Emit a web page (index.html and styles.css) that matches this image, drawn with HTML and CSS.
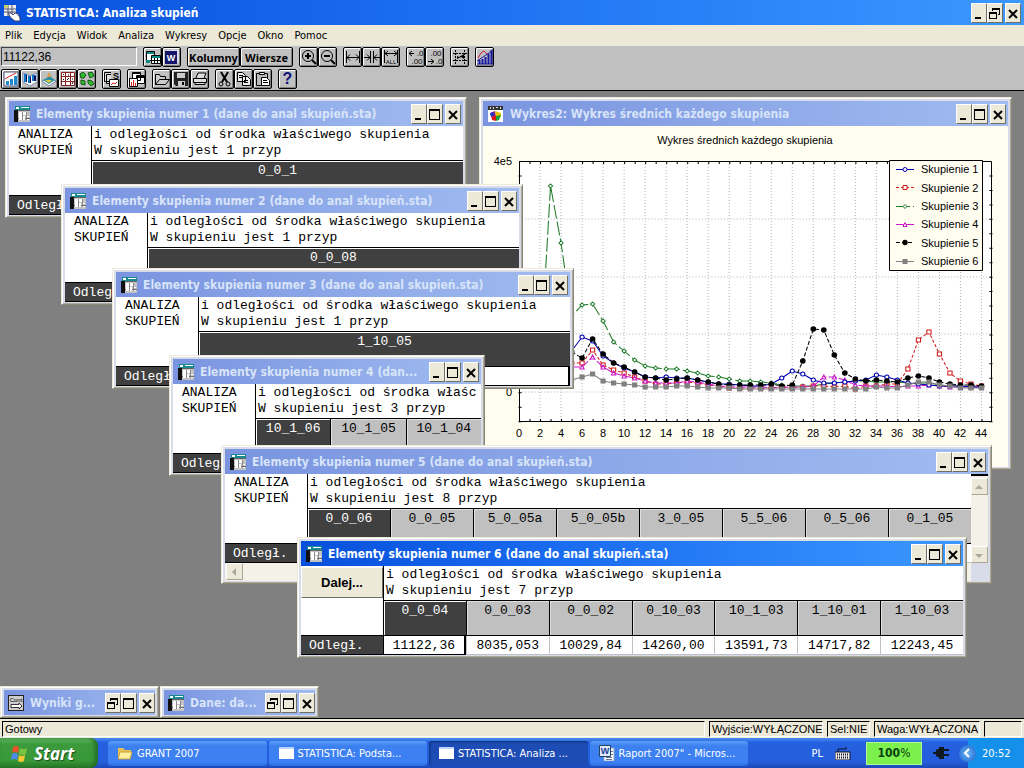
FILE: index.html
```
<!DOCTYPE html>
<html lang="pl">
<head>
  <meta charset="UTF-8">
  <title>STATISTICA: Analiza skupień</title>
  <meta name="viewport" content="width=device-width, initial-scale=1.0">
  <link rel="stylesheet" href="styles.css">
</head>
<body>
  <!-- shared icons -->
  <svg class="defs" aria-hidden="true">
    <symbol id="i-min" viewBox="0 0 14 18"><path d="M3 13h6v2H3z"/></symbol>
    <symbol id="i-max" viewBox="0 0 14 18"><path d="M1 4h11v11H1zM2 6v8h9V6z" fill-rule="evenodd"/></symbol>
    <symbol id="i-restore" viewBox="0 0 14 18"><path d="M4 4h8v7h-2v-1h1V6H5v1H4zM1 8h8v7H1zM2 10v4h6v-4z" fill-rule="evenodd"/></symbol>
    <symbol id="i-close" viewBox="0 0 14 18"><path d="M3 6l8 8M11 6l-8 8" stroke="#000" stroke-width="2"/></symbol>
    <symbol id="i-sheet" viewBox="0 0 16 16">
      <path d="M1 0h15v4H1z" fill="#178a8f"/><path d="M0 4h5v12H0z" fill="#111"/><path d="M4 4h12v12H4z" fill="#c4c4c4"/>
      <path d="M2 1h3v2H2zM7 1h8v1H7z" fill="#fff"/><path d="M4 4.500h12M4 12.500h12" stroke="#666"/><path d="M5 6h3v8H5zM9 6h3v3H9zM9 10h2v4H9zM12 10h3v1h-3zM12 13h3v1h-3z" fill="#fff"/><path d="M8.500 6v8M12.500 6v8" stroke="#888"/>
    </symbol>
    <symbol id="i-graph" viewBox="0 0 16 16">
      <path d="M0 0h15v16H0z" fill="#fff"/><path d="M0 0h15v4H0z" fill="#333"/><path d="M2 1h1v2H2zM5 1h1v2H5zM8 1h2v1H8zM12 1h1v2h-1z" fill="#ddd"/>
      <path d="M2 7l5-2 1 5-5 1z" fill="#7a1fa0"/><path d="M7 5l6 2v4H8z" fill="#e8c400"/><path d="M3 9l5 1v5l-4-1z" fill="#e01818"/><path d="M8 10l5-1-2 5-3 1z" fill="#18a038"/><path d="M2 8l2-2 2 3-2 2z" fill="#1838d0"/>
    </symbol>
  </svg>

  <header class="titlebar">
    <svg class="app-icon" viewBox="0 0 18 18"><path d="M1 1h12v11H1z" fill="#eee"/><path d="M1 5h12M1 8h12M5 1v11M9 1v11" stroke="#557"/><path d="M1 1h4v3H1z" fill="#c8d070"/><path d="M5 9h3l2 2 2-2 3 1 2 4v3h-5l-4-3z" fill="#fff" stroke="#446"/></svg>
    <h1>STATISTICA: Analiza skupień</h1>
    <div class="win-buttons">
      <button aria-label="Minimalizuj"><svg><use href="#i-min"/></svg></button>
      <button aria-label="Przywróć"><svg><use href="#i-restore"/></svg></button>
      <button aria-label="Zamknij" class="close"><svg><use href="#i-close"/></svg></button>
    </div>
  </header>

  <nav class="menubar">
    <button>Plik</button><button>Edycja</button><button>Widok</button><button>Analiza</button><button>Wykresy</button><button>Opcje</button><button>Okno</button><button>Pomoc</button>
  </nav>

  <div class="toolbars">
    <div class="toolbar first">
      <input class="cell-value" type="text" value="11122,36" aria-label="Wartość">
      <div class="group">
        <button aria-label="Arkusz"><svg viewBox="0 0 16 16"><path d="M1.500 2.500h8v9h-8z" fill="#fff" stroke="#000"/><path d="M2 3h7v2H2z" fill="#0a8a80"/><path d="M6.500 6.500h9v8h-9z" fill="#fff" stroke="#000"/><path d="M7 7h8v2H7zM1 11h4v3H1z" fill="#0a8a80"/><path d="M7 11.500h8M9.500 9v5M12.500 9v5" stroke="#000"/></svg></button>
        <button aria-label="Word"><svg viewBox="0 0 16 16"><path d="M3 1h12v12H3z" fill="#dde"/><path d="M1 2h12v13H1z" fill="#15156a"/><text x="7" y="12" class="t9" fill="#fff">W</text></svg></button>
      </div>
      <div class="group">
        <button class="wide">Kolumny</button><button class="wide">Wiersze</button>
      </div>
      <div class="group">
        <button aria-label="Powiększ"><svg viewBox="0 0 16 16"><g fill="none" stroke="#000"><circle cx="7" cy="7" r="5.5"/><path d="M4 7h6M7 4v6M11 11l4 4" stroke-width="2"/></g></svg></button>
        <button aria-label="Pomniejsz"><svg viewBox="0 0 16 16"><g fill="none" stroke="#000"><circle cx="7" cy="7" r="5.5"/><path d="M4 7h6M11 11l4 4" stroke-width="2"/></g></svg></button>
      </div>
      <div class="group">
        <button aria-label="Poszerz"><svg viewBox="0 0 16 16"><path d="M1.500 2v12M14.500 2v12M2 8.500h12M5 5.500l-3 3 3 3M11 5.500l3 3-3 3" fill="none" stroke="#000"/></svg></button>
        <button aria-label="Zwęź"><svg viewBox="0 0 16 16"><path d="M6.500 2v12M9.500 2v12M0 8.500h6M10 8.500h6M3 5.500l3 3-3 3M13 5.500l-3 3 3 3" fill="none" stroke="#000"/></svg></button>
        <button aria-label="Dopasuj wszystkie"><svg viewBox="0 0 16 16"><path d="M1.500 1v13M14.500 1v13M2 4.500h12M5 2L2 4.500 5 7M11 2l3 2.500L11 7" fill="none" stroke="#000"/><text x="8" y="15" class="t6">ALL</text></svg></button>
      </div>
      <div class="group">
        <button aria-label="Mniej miejsc"><svg viewBox="0 0 16 16"><path d="M1 4.500h5M4 2L1 4.500 4 7" fill="none" stroke="#000"/><text x="12" y="7" class="t8">.0</text><text x="9" y="15" class="t8">.00</text></svg></button>
        <button aria-label="Więcej miejsc"><svg viewBox="0 0 16 16"><text x="9" y="7" class="t8">.00</text><path d="M1 12.500h5M4 10l3 2.500L4 15" fill="none" stroke="#000"/><text x="12" y="15" class="t8">.0</text></svg></button>
      </div>
      <div class="group">
        <button aria-label="Przypadki"><svg viewBox="0 0 16 16"><path d="M3.500 1v14M12.500 1v14M1 4.500h14M1 11.500h14" stroke="#000" stroke-dasharray="2 1"/><path d="M5 10V7l2 1 5-3v5l-3-2z"/></svg></button>
      </div>
      <div class="group">
        <button aria-label="Wykres"><svg viewBox="0 0 16 16"><path d="M1 9l3-5 3-2 4 4" fill="none" stroke="#d02040"/><path d="M2.500 15v-4M5.500 15v-5M8.500 15V8M11.500 15V5M14.500 15V1" stroke="#1616a0" stroke-width="2"/><path d="M0 12L15 2M0 15h16" stroke="#1616a0"/></svg></button>
      </div>
    </div>
    <div class="toolbar second">
      <div class="group">
        <button aria-label="Wykresy 2W"><svg viewBox="0 0 16 16"><path d="M1 1h14v14H1z" fill="#fff" stroke="#457"/><path d="M3 14v-4h3v4M7 14V8h3v6M11 14V5h3v9" fill="#28c"/><path d="M2 8l5-3 6-3" fill="none" stroke="#d22"/></svg></button>
        <button aria-label="Wykresy 3W sekwencyjne"><svg viewBox="0 0 16 16"><path d="M1 2l7 3 7-3v9l-7 4-7-4z" fill="#fff" stroke="#78a"/><path d="M2 3h3v8H2zM6 5h3v7H6zM10 4h4v6h-4z" fill="#17c"/><path d="M4 4h1v7H4zM8 6h1v6H8zM12 5h2v5h-2z" fill="#115"/></svg></button>
        <button aria-label="Wykresy 3W XYZ"><svg viewBox="0 0 16 16"><path d="M1 10l7-3 7 3-7 5z" fill="#fff" stroke="#78a"/><path d="M2 9l4-2 2-5 3 5 3 2-6 4z" fill="#2a8fa0"/><path d="M6 6l2-5 2 5z" fill="#e94"/><path d="M4 9h7l-3 3z" fill="#dc4"/></svg></button>
        <button aria-label="Macierzowe"><svg viewBox="0 0 16 16"><path d="M1.500 1.500h13v13h-13z" fill="#fff" stroke="#822"/><path d="M1 5.500h14M1 10.500h14M5.500 1v14M10.500 1v14" stroke="#822"/><path d="M3 4l1-1M7 9l2-2M12 13l1-2M8 4h1M3 9l1-1M12 8h1" stroke="#111"/></svg></button>
        <button aria-label="Obrazkowe"><svg viewBox="0 0 16 16"><path d="M1 3l3-2 3 3-2 3H2zM9 2l4-1 2 4-4 2zM2 9l4 1v4l-4-1zM9 9l4 1 2 3-3 2-3-3z" fill="#3b3" stroke="#151"/></svg></button>
      </div>
      <div class="group">
        <button aria-label="Statystyki"><svg viewBox="0 0 16 16"><path d="M.5 1.500h9v9h-9zM2.500 3.500h9v9h-9z" fill="#ddd" stroke="#000"/><path d="M5.500 8.500h9v7h-9z" fill="#fff" stroke="#000"/><path d="M7 0h9v8H7z" fill="#c0c0c0"/><text x="12" y="8" class="t9">S</text><path d="M7 14l2-2 2 1 2-2" fill="none" stroke="#d22"/></svg></button>
      </div>
      <div class="group">
        <button aria-label="Okna"><svg viewBox="0 0 16 16"><path d="M3.500 1.500h8v8h-8zM7.500 4.500h8v8h-8z" fill="#fff" stroke="#000"/><path d="M4 2h7v1H4zM8 5h7v2H8z"/><path d="M.5 7.500h8v8h-8z" fill="#fff" stroke="#000"/><path d="M2.500 15v-4M4.500 15v-6M6.500 15v-3" stroke="#d22"/></svg></button>
      </div>
      <div class="group">
        <button aria-label="Otwórz"><svg viewBox="0 0 16 16"><path d="M1.500 13V3.500h4l1 2h5V8M1.500 13.500l4-5h10l-4 5z" fill="#ccc" stroke="#000"/></svg></button>
        <button aria-label="Zapisz"><svg viewBox="0 0 16 16"><path d="M1 1h14v14H3l-2-2z" fill="#222"/><path d="M4 2h8v5H4zM5 10h7v5H5z" fill="#ccc"/><path d="M9 11h2v3H9z"/></svg></button>
        <button aria-label="Drukuj"><svg viewBox="0 0 16 16"><path d="M4 7l2-5h8l-2 5M1.500 7.500h13v4h-13zM3 11.500h10v2H3z" fill="#ddd" stroke="#000"/></svg></button>
      </div>
      <div class="group">
        <button aria-label="Wytnij"><svg viewBox="0 0 16 16"><path d="M4 1l6 10M11 1L5 11" stroke="#000" stroke-width="2"/><circle cx="4" cy="13" r="2" fill="none" stroke="#000"/><circle cx="11" cy="13" r="2" fill="none" stroke="#000"/></svg></button>
        <button aria-label="Kopiuj"><svg viewBox="0 0 16 16"><path d="M1.500 1.500h5l3 3v6h-8zM6.500 5.500h5l3 3v6h-8z" fill="#eee" stroke="#000"/><path d="M3 4.500h4M3 6.500h3M8 9.500h4M8 11.500h4" stroke="#000"/></svg></button>
        <button aria-label="Wklej"><svg viewBox="0 0 16 16"><path d="M1.500 2.500h11v12h-11z" fill="#bbb" stroke="#000"/><path d="M4.500 1.500h5v2h-5z" fill="#eee" stroke="#000"/><path d="M6.500 6.500h5l3 3v5h-8z" fill="#fff" stroke="#000"/><path d="M8 9.500h4M8 11.500h5" stroke="#000"/></svg></button>
      </div>
      <div class="group">
        <button aria-label="Pomoc" class="help">?</button>
      </div>
    </div>
  </div>

  <main class="desktop">
    <section class="window chart-window">
      <div class="caption">
        <svg class="icon"><use href="#i-graph"/></svg>
        <h2>Wykres2: Wykres średnich każdego skupienia</h2>
        <div class="win-buttons">
          <button aria-label="Minimalizuj"><svg><use href="#i-min"/></svg></button>
          <button aria-label="Maksymalizuj"><svg><use href="#i-max"/></svg></button>
          <button aria-label="Zamknij" class="close"><svg><use href="#i-close"/></svg></button>
        </div>
      </div>
      <svg class="chart" viewBox="0 0 525 341">
        <defs>
          <marker id="m1" markerWidth="7" markerHeight="7" refX="3.5" refY="3.5" markerUnits="userSpaceOnUse"><circle cx="3.5" cy="3.5" r="2" fill="#fff" stroke="#0000b0"/></marker>
          <marker id="m2" markerWidth="7" markerHeight="7" refX="3.5" refY="3.5" markerUnits="userSpaceOnUse"><path d="M1.500 1.500h4v4h-4z" fill="#fff" stroke="#d01818"/></marker>
          <marker id="m3" markerWidth="7" markerHeight="7" refX="3.5" refY="3.5" markerUnits="userSpaceOnUse"><path d="M3.500 1.500l2 2-2 2-2-2z" fill="#fff" stroke="#1c7a28"/></marker>
          <marker id="m4" markerWidth="7" markerHeight="7" refX="3.5" refY="3.5" markerUnits="userSpaceOnUse"><path d="M3.500 1.500l2 4h-4z" fill="#fff" stroke="#c818c8"/></marker>
          <marker id="m5" markerWidth="7" markerHeight="7" refX="3.5" refY="3.5" markerUnits="userSpaceOnUse"><circle cx="3.5" cy="3.5" r="2.700"/></marker>
          <marker id="m6" markerWidth="7" markerHeight="7" refX="3.5" refY="3.5" markerUnits="userSpaceOnUse"><path d="M1 1h5v5H1z" fill="#808080"/></marker>
        </defs>
        <text x="262" y="18" text-anchor="middle">Wykres średnich każdego skupienia</text>
        <text x="29" y="39" text-anchor="end">4e5</text>
        <text x="29" y="270" text-anchor="end">0</text>

        <svg x="36" y="35" width="473" height="261" viewBox="0 0 450 261" preserveAspectRatio="none" overflow="visible">
          <path d="M0 0h450v261H0z" fill="#fff"/>
          <path class="grid" d="M20 0v261M40 0v261M60 0v261M80 0v261M100 0v261M120 0v261M140 0v261M160 0v261M180 0v261M200 0v261M220 0v261M240 0v261M260 0v261M280 0v261M300 0v261M320 0v261M340 0v261M360 0v261M380 0v261M400 0v261M420 0v261M440 0v261M0 58h450M0 116h450M0 173h450M0 231h450"/>
          <path d="M0 1.500h450M0 259.500h450" fill="none" stroke="#000" stroke-width="3" stroke-dasharray="1 9"/>
          <path d="M1 14.500v247M449 14.500v247" fill="none" stroke="#000" stroke-width="3" stroke-dasharray="1 13.450"/>
          <polyline class="s3" points="10,224 20,205 30,25 40,82 50,155 60,144 70,143 80,160 90,181 100,190 110,199 120,205 130,207 140,208 150,208 160,210 170,212 180,215 190,216 200,218 210,220 220,220 230,221 240,222 250,224 260,225 270,225 280,225 290,223 300,222 310,221 320,220 330,220 340,221 350,221 360,221 370,222 380,222 390,222 400,224 410,225 420,225 430,225 440,226"/>
          <polyline class="s2" points="50,202 60,202 70,189 80,204 90,209 100,212 110,216 120,220 130,223 140,223 150,222 160,221 170,222 180,224 190,225 200,227 210,227 220,227 230,227 240,227 250,226 260,227 270,226 280,225 290,225 300,226 310,225 320,228 330,225 340,225 350,223 360,223 370,208 380,179 390,171 400,193 410,212 420,220 430,223 440,225"/>
          <polyline class="s4" points="50,206 60,206 70,196 80,206 90,212 100,215 110,217 120,220 130,222 140,222 150,222 160,220 170,221 180,223 190,225 200,226 210,226 220,226 230,226 240,227 250,226 260,226 270,226 280,225 290,216 300,216 310,219 320,224 330,225 340,225 350,225 360,226 370,225 380,225 390,224 400,225 410,226 420,226 430,226 440,226"/>
          <polyline class="s1" points="50,190 60,176 70,180 80,195 90,202 100,207 110,211 120,216 130,217 140,216 150,217 160,217 170,219 180,221 190,223 200,223 210,224 220,225 230,225 240,223 250,217 260,210 270,213 280,219 290,222 300,222 310,221 320,220 330,219 340,214 350,216 360,219 370,222 380,223 390,224 400,225 410,225 420,225 430,226 440,226"/>
          <polyline class="s5" points="50,191 60,197 70,178 80,193 90,202 100,206 110,211 120,216 130,217 140,219 150,218 160,217 170,219 180,221 190,223 200,224 210,224 220,224 230,224 240,223 250,225 260,224 270,200 280,168 290,169 300,194 310,212 320,218 330,220 340,219 350,220 360,221 370,217 380,215 390,217 400,221 410,223 420,224 430,224 440,225"/>
          <polyline class="s6" points="50,219 60,216 70,213 80,220 90,222 100,223 110,224 120,226 130,226 140,226 150,225 160,225 170,226 180,227 190,227 200,227 210,228 220,228 230,228 240,228 250,228 260,228 270,228 280,228 290,228 300,228 310,228 320,228 330,228 340,226 350,227 360,227 370,224 380,221 390,221 400,224 410,225 420,227 430,227 440,227"/>
        </svg>
        <path class="frame" d="M36.500 35.500h472v260h-472z"/>

        <g text-anchor="middle">
          <text x="36" y="311">0</text><text x="57" y="311">2</text><text x="78" y="311">4</text><text x="99" y="311">6</text><text x="120" y="311">8</text>
          <text x="141" y="311">10</text><text x="162" y="311">12</text><text x="183" y="311">14</text><text x="204" y="311">16</text><text x="225" y="311">18</text>
          <text x="246" y="311">20</text><text x="267" y="311">22</text><text x="288" y="311">24</text><text x="309" y="311">26</text><text x="330" y="311">28</text>
          <text x="351" y="311">30</text><text x="372" y="311">32</text><text x="393" y="311">34</text><text x="414" y="311">36</text><text x="435" y="311">38</text>
          <text x="456" y="311">40</text><text x="477" y="311">42</text><text x="498" y="311">44</text>
        </g>

        <path class="legend-box" d="M406.500 34.500h93v110h-93z"/>
        <polyline class="s1" points="413,43.500 422,43.500 431,43.500"/>
        <polyline class="s2" points="413,61.500 422,61.500 431,61.500"/>
        <polyline class="s3" points="413,80.500 422,80.500 431,80.500"/>
        <polyline class="s4" points="413,98.500 422,98.500 431,98.500"/>
        <polyline class="s5" points="413,116.500 422,116.500 431,116.500"/>
        <polyline class="s6" points="413,135.500 422,135.500 431,135.500"/>
        <text x="438" y="47">Skupienie 1</text>
        <text x="438" y="66">Skupienie 2</text>
        <text x="438" y="84">Skupienie 3</text>
        <text x="438" y="102">Skupienie 4</text>
        <text x="438" y="121">Skupienie 5</text>
        <text x="438" y="139">Skupienie 6</text>
      </svg>
    </section>

    <section class="window sheet-1">
      <div class="caption">
        <svg class="icon"><use href="#i-sheet"/></svg>
        <h2>Elementy skupienia numer 1 (dane do anal skupień.sta)</h2>
        <div class="win-buttons">
          <button aria-label="Minimalizuj"><svg><use href="#i-min"/></svg></button>
          <button aria-label="Maksymalizuj"><svg><use href="#i-max"/></svg></button>
          <button aria-label="Zamknij" class="close"><svg><use href="#i-close"/></svg></button>
        </div>
      </div>
      <table class="sheet">
        <tr class="info"><th class="side">ANALIZA<br>SKUPIEŃ</th><td>i odległości od środka właściwego skupienia<br>W skupieniu jest 1 przyp</td></tr>
        <tr class="names"><td class="side"></td><th class="on">0_0_1</th></tr>
        <tr class="values"><th class="side">Odległ.</th><td class="on"></td></tr>
      </table>
    </section>

    <section class="window sheet-2">
      <div class="caption">
        <svg class="icon"><use href="#i-sheet"/></svg>
        <h2>Elementy skupienia numer 2 (dane do anal skupień.sta)</h2>
        <div class="win-buttons">
          <button aria-label="Minimalizuj"><svg><use href="#i-min"/></svg></button>
          <button aria-label="Maksymalizuj"><svg><use href="#i-max"/></svg></button>
          <button aria-label="Zamknij" class="close"><svg><use href="#i-close"/></svg></button>
        </div>
      </div>
      <table class="sheet">
        <tr class="info"><th class="side">ANALIZA<br>SKUPIEŃ</th><td>i odległości od środka właściwego skupienia<br>W skupieniu jest 1 przyp</td></tr>
        <tr class="names"><td class="side"></td><th class="on">0_0_08</th></tr>
        <tr class="values"><th class="side">Odległ.</th><td class="on"></td></tr>
      </table>
    </section>

    <section class="window sheet-3">
      <div class="caption">
        <svg class="icon"><use href="#i-sheet"/></svg>
        <h2>Elementy skupienia numer 3 (dane do anal skupień.sta)</h2>
        <div class="win-buttons">
          <button aria-label="Minimalizuj"><svg><use href="#i-min"/></svg></button>
          <button aria-label="Maksymalizuj"><svg><use href="#i-max"/></svg></button>
          <button aria-label="Zamknij" class="close"><svg><use href="#i-close"/></svg></button>
        </div>
      </div>
      <table class="sheet">
        <tr class="info"><th class="side">ANALIZA<br>SKUPIEŃ</th><td>i odległości od środka właściwego skupienia<br>W skupieniu jest 1 przyp</td></tr>
        <tr class="names"><td class="side"></td><th class="on">1_10_05</th></tr>
        <tr class="values"><th class="side">Odległ.</th><td class="on"></td></tr>
      </table>
    </section>

    <section class="window sheet-4">
      <div class="caption">
        <svg class="icon"><use href="#i-sheet"/></svg>
        <h2>Elementy skupienia numer 4 (dan...</h2>
        <div class="win-buttons">
          <button aria-label="Minimalizuj"><svg><use href="#i-min"/></svg></button>
          <button aria-label="Maksymalizuj"><svg><use href="#i-max"/></svg></button>
          <button aria-label="Zamknij" class="close"><svg><use href="#i-close"/></svg></button>
        </div>
      </div>
      <table class="sheet">
        <tr class="info"><th class="side">ANALIZA<br>SKUPIEŃ</th><td colspan="3">i odległości od środka właśc<br>W skupieniu jest 3 przyp</td></tr>
        <tr class="names"><td class="side"></td><th class="on">10_1_06</th><th>10_1_05</th><th>10_1_04</th></tr>
        <tr class="values"><th class="side">Odległ.</th><td class="on"></td><td></td><td></td></tr>
      </table>
    </section>

    <section class="window sheet-5">
      <div class="caption">
        <svg class="icon"><use href="#i-sheet"/></svg>
        <h2>Elementy skupienia numer 5 (dane do anal skupień.sta)</h2>
        <div class="win-buttons">
          <button aria-label="Minimalizuj"><svg><use href="#i-min"/></svg></button>
          <button aria-label="Maksymalizuj"><svg><use href="#i-max"/></svg></button>
          <button aria-label="Zamknij" class="close"><svg><use href="#i-close"/></svg></button>
        </div>
      </div>
      <div class="scroll-area">
        <table class="sheet">
          <tr class="info"><th class="side">ANALIZA<br>SKUPIEŃ</th><td colspan="8">i odległości od środka właściwego skupienia<br>W skupieniu jest 8 przyp</td></tr>
          <tr class="names"><td class="side"></td><th class="on">0_0_06</th><th>0_0_05</th><th>5_0_05a</th><th>5_0_05b</th><th>3_0_05</th><th>5_5_06</th><th>0_5_06</th><th>0_1_05</th></tr>
          <tr class="values"><th class="side">Odległ.</th><td class="on"></td><td></td><td></td><td></td><td></td><td></td><td></td><td></td></tr>
        </table>
        <div class="scroll-v"><button aria-label="W górę"><svg viewBox="0 0 14 14"><path d="M3 9l4-4 4 4z"/></svg></button><button aria-label="W dół"><svg viewBox="0 0 14 14"><path d="M3 6l4 4 4-4z"/></svg></button></div>
      </div>
      <div class="scroll-h"><button aria-label="W lewo"><svg viewBox="0 0 14 14"><path d="M9 3L5 7l4 4z"/></svg></button></div>
    </section>

    <section class="window sheet-6 active">
      <div class="caption">
        <svg class="icon"><use href="#i-sheet"/></svg>
        <h2>Elementy skupienia numer 6 (dane do anal skupień.sta)</h2>
        <div class="win-buttons">
          <button aria-label="Minimalizuj"><svg><use href="#i-min"/></svg></button>
          <button aria-label="Maksymalizuj"><svg><use href="#i-max"/></svg></button>
          <button aria-label="Zamknij" class="close"><svg><use href="#i-close"/></svg></button>
        </div>
      </div>
      <table class="sheet">
        <tr class="info"><th class="side next"><button>Dalej...</button></th><td colspan="7">i odległości od środka właściwego skupienia<br>W skupieniu jest 7 przyp</td></tr>
        <tr class="names"><td class="side"></td><th class="on">0_0_04</th><th>0_0_03</th><th>0_0_02</th><th>0_10_03</th><th>10_1_03</th><th>1_10_01</th><th>1_10_03</th></tr>
        <tr class="values"><th class="side">Odległ.</th><td class="on">11122,36</td><td>8035,053</td><td>10029,84</td><td>14260,00</td><td>13591,73</td><td>14717,82</td><td>12243,45</td></tr>
      </table>
    </section>

    <div class="minimized">
      <section class="window">
        <div class="caption">
          <svg class="icon" viewBox="0 0 16 16"><path d="M0 0h16v16H0z" fill="#222"/><path d="M1 1h14v14H1z" fill="#ccc"/><text x="8" y="7" class="t6">Cont</text><path d="M3 9.500h8V8l3 3-3 3v-1.500H3z" fill="#fff" stroke="#333"/></svg>
          <h2>Wyniki g...</h2>
          <div class="win-buttons">
            <button aria-label="Przywróć"><svg><use href="#i-restore"/></svg></button>
            <button aria-label="Maksymalizuj"><svg><use href="#i-max"/></svg></button>
            <button aria-label="Zamknij" class="close"><svg><use href="#i-close"/></svg></button>
          </div>
        </div>
      </section>
      <section class="window">
        <div class="caption">
          <svg class="icon"><use href="#i-sheet"/></svg>
          <h2>Dane: da...</h2>
          <div class="win-buttons">
            <button aria-label="Przywróć"><svg><use href="#i-restore"/></svg></button>
            <button aria-label="Maksymalizuj"><svg><use href="#i-max"/></svg></button>
            <button aria-label="Zamknij" class="close"><svg><use href="#i-close"/></svg></button>
          </div>
        </div>
      </section>
    </div>
  </main>

  <div class="statusbar">
    <span class="message">Gotowy</span>
    <span class="output">Wyjście:WYŁĄCZONE</span>
    <span class="sel">Sel:NIE</span>
    <span class="weight">Waga:WYŁĄCZONA</span>
    <span class="empty"></span>
  </div>

  <footer class="taskbar">
    <button class="start">
      <svg viewBox="0 0 18 18"><path d="M2 3q3-2 6 0L7 9Q4 7 1 9z" fill="#e8542a"/><path d="M9 4q3 2 7 0l-1 6q-4 2-7 0z" fill="#7cc242"/><path d="M1 10q3-2 6 0l-1 6q-3-2-6 0z" fill="#4a8af0"/><path d="M8 11q3 2 6 0l-1 6q-3 2-6 0z" fill="#f8c830"/></svg>
      Start
    </button>
    <div class="tasks">
      <button><svg viewBox="0 0 16 16"><path d="M1 3h5l2 2h6v9H1z" fill="#e8c050"/><path d="M1 14l2-7h12l-2 7z" fill="#fff0a0" stroke="#c8a040"/></svg>GRANT 2007</button>
      <button><svg viewBox="0 0 16 16"><path d="M1 3h15v11H1z" fill="#fff"/><path d="M1 2h15v2H1z" fill="#b8d4ff"/></svg>STATISTICA: Podsta...</button>
      <button class="pressed"><svg viewBox="0 0 16 16"><path d="M1 3h15v11H1z" fill="#fff"/><path d="M1 2h15v2H1z" fill="#b8d4ff"/></svg>STATISTICA: Analiza ...</button>
      <button><svg viewBox="0 0 16 16"><path d="M5 3h10v13H5z" fill="#fff" stroke="#9ab"/><path d="M7 12.500h6M7 14.500h6M12 6.500h2M12 9.500h2" stroke="#679"/><path d="M.5.5h11v11H.5z" fill="#dfe8f8" stroke="#246"/><text x="6" y="9" class="t9" fill="#1c3f94">W</text></svg>Raport 2007" - Micros...</button>
    </div>
    <div class="lang">PL <svg viewBox="0 0 16 14"><path d="M0 6h15v8H0z" fill="#eee" stroke="#112"/><path d="M3 6V3h8V1" fill="none" stroke="#112"/><path d="M2 8.500h12M2 11.500h12" stroke="#112" stroke-width="2" stroke-dasharray="1 1"/></svg></div>
    <div class="battery"><b>100</b>%</div>
    <svg class="plug" viewBox="0 0 16 14"><path d="M4 3h2V1h5v12H6v-2H4q-3-4 0-8z" fill="#101820"/><path d="M11 4h5M11 9h5M0 7h3" stroke="#101820" stroke-width="2"/></svg>
    <div class="tray">
      <button aria-label="Pokaż ukryte ikony"><svg viewBox="0 0 16 16"><path d="M10 4L6 8l4 4" fill="none" stroke="#fff" stroke-width="2"/></svg></button>
      <span>20:52</span>
    </div>
  </footer>
</body>
</html>
```

FILE: styles.css
```
* {
  box-sizing: border-box;
}

body {
  margin: 0;
  height: 100vh;
  display: flex;
  flex-direction: column;
  overflow: hidden;
  font-family: "DejaVu Sans Condensed", "Noto Sans", sans-serif;
  font-size: 11px;
  color: #000;
  background: #808080;
}

button {
  font-family: inherit;
  font-size: inherit;
  padding: 0;
  margin: 0;
  border: 0;
  color: inherit;
}

h1, h2 {
  margin: 0;
  flex: 1;
  min-width: 0;
  font-size: 12px;
  font-weight: bold;
  line-height: 16px;
  white-space: nowrap;
  overflow: hidden;
}

.defs {
  position: absolute;
  width: 0;
  height: 0;
}

/* letters inside icons */
.t6, .t8, .t9 {
  font-family: "Liberation Sans", sans-serif;
  font-size: 6px;
  text-anchor: middle;
}

.t8 {
  font-size: 8px;
}

.t9 {
  font-size: 9px;
  font-weight: bold;
}

/* main title bar */
.titlebar {
  display: flex;
  align-items: center;
  height: 25px;
  padding: 0 3px;
  color: #fff;
  background: linear-gradient(90deg, #0850dc, #1a6cf0 40%, #3c98ff);
}

.app-icon {
  width: 18px;
  height: 18px;
  margin-right: 5px;
}

.win-buttons {
  display: flex;
}

.win-buttons button {
  width: 16px;
  height: 20px;
  display: flex;
  background: #ece9d8;
  border: 1px solid;
  border-color: #fff #716f64 #716f64 #fff;
}

.win-buttons svg {
  width: 14px;
  height: 18px;
}

.win-buttons .close {
  margin-left: 2px;
}

/* menu */
.menubar {
  display: flex;
  gap: 11px;
  height: 21px;
  padding: 0 5px;
  background: #ece9d8;
}

.menubar button {
  background: none;
}

/* toolbars */
.toolbars {
  display: flex;
  flex-direction: column;
  gap: 2px;
  height: 45px;
  padding: 1px 1px 0;
  background: #c0c0c0;
  border-bottom: 1px solid #000;
}

.toolbar {
  display: flex;
  gap: 6px;
}

.cell-value {
  width: 136px;
  height: 19px;
  padding: 0 1px;
  border: 1px solid;
  border-color: #404040 #fff #fff #404040;
  border-radius: 0;
  background: #c0c0c0;
  font-family: "Liberation Sans", sans-serif;
  font-size: 12px;
}

.group {
  display: flex;
}

.group button {
  display: flex;
  align-items: center;
  justify-content: center;
  width: 19px;
  height: 20px;
  background: #c0c0c0;
  border: 1px solid #000;
  border-radius: 2px;
  box-shadow: inset 1px 1px #fff, inset -1px -1px #808080;
}

.group svg {
  flex: none;
  width: 16px;
  height: 16px;
}

.group .wide {
  width: 53px;
  font-family: "Noto Sans", sans-serif;
  font-size: 11px;
  font-weight: bold;
}

.group .help {
  font-family: "Liberation Sans", sans-serif;
  font-size: 16px;
  font-weight: bold;
  color: #10107a;
}

/* mdi area */
.desktop {
  position: relative;
  flex: 1;
  min-height: 0;
  overflow: hidden;
}

.window {
  padding: 3px 3px 2px;
  background: #d8dce8;
  border: 1px solid;
  border-color: #ece9d8 #8a8878 #8a8878 #ece9d8;
  box-shadow: inset 1px 1px #fff, inset -1px -1px #aca899;
}

.desktop > .window {
  position: absolute;
}

.chart-window { left: 479px; top: 6px; width: 533px; }
.sheet-1 { left: 5px; top: 6px; width: 462px; }
.sheet-2 { left: 61px; top: 93px; width: 462px; }
.sheet-3 { left: 112px; top: 177px; width: 462px; }
.sheet-4 { left: 169px; top: 264px; width: 316px; }
.sheet-5 { left: 221px; top: 354px; width: 771px; }
.sheet-6 { left: 297px; top: 446px; width: 670px; }

.caption {
  display: flex;
  align-items: center;
  height: 25px;
  padding: 0 2px 0 5px;
  color: #d8e4f8;
  background: linear-gradient(90deg, #7a94e0, #a0bcf0);
}

.active .caption {
  color: #fff;
  background: linear-gradient(90deg, #0850dc, #1a6cf0 40%, #3c98ff);
}

.icon {
  flex: none;
  width: 16px;
  height: 16px;
  margin-right: 6px;
}

.minimized {
  position: absolute;
  left: 0;
  bottom: 0;
  display: flex;
  gap: 1px;
}

.minimized .window {
  width: 159px;
}

.minimized .caption {
  padding: 0 0 0 4px;
}

/* spreadsheets */
.sheet {
  width: 100%;
  table-layout: fixed;
  border-collapse: separate;
  border-spacing: 0;
  background: #fff;
  font-family: "Liberation Mono", monospace;
  font-size: 13px;
  line-height: 16px;
}

.sheet th,
.sheet td {
  padding: 0;
  font-weight: normal;
  text-align: center;
  vertical-align: top;
  white-space: nowrap;
  overflow: hidden;
}

.sheet .side {
  width: 82px;
  padding-left: 9px;
  text-align: left;
}

.info > * {
  height: 35px;
}

.sheet .info th,
.sheet .info td {
  padding-top: 1px;
}

.sheet .info td {
  padding-left: 2px;
  text-align: left;
  border-left: 1px solid #000;
  border-bottom: 1px solid #000;
}

.sheet .info .next {
  padding: 1px 0 0;
}

.next button {
  display: block;
  width: 100%;
  height: 31px;
  background: #ece9d8;
  border: 1px solid;
  border-color: #fff #716f64 #716f64 #fff;
  font-family: "Liberation Sans", sans-serif;
  font-size: 13px;
  font-weight: bold;
}

.names > * {
  height: 35px;
  border-bottom: 1px solid #000;
}

.sheet .names th {
  padding-top: 2px;
  background: #c0c0c0;
  border-left: 1px solid #000;
  box-shadow: inset 1px 1px #e0e0e0;
}

.sheet .names th.on {
  color: #fff;
  background: #404040;
  box-shadow: inset 1px 1px #fff;
}

.sheet .values > * {
  height: 19px;
  padding-top: 2px;
  border-bottom: 1px solid #000;
}

.sheet .values .side {
  padding-left: 8px;
  color: #fff;
  background: #404040;
}

.sheet .values td {
  border-left: 1px solid #c0c0c0;
  border-bottom-color: #c0c0c0;
}

.sheet .values .on {
  border: 1px solid #000;
  border-right-width: 2px;
  border-top: 0;
}

/* scrollbars of the wide sheet */
.scroll-area {
  display: flex;
}

.scroll-v {
  flex: none;
  width: 17px;
  display: flex;
  flex-direction: column;
  justify-content: space-between;
  padding-top: 2px;
  border-top: 2px solid #000;
  background: #f4f2e8;
}

.scroll-h {
  height: 18px;
  padding-left: 1px;
  margin-right: 17px;
  background: #f4f2e8;
}

.scroll-v button,
.scroll-h button {
  width: 17px;
  height: 17px;
  background: #ece9d8;
  border: 1px solid;
  border-color: #fff #aca899 #aca899 #fff;
}

.scroll-v svg,
.scroll-h svg {
  display: block;
  width: 14px;
  height: 14px;
  fill: #aca899;
}

/* chart */
.chart {
  display: block;
  width: 100%;
  background: #fffdf0;
  font-family: "Liberation Sans", sans-serif;
  font-size: 11px;
}

.grid {
  fill: none;
  stroke: #b8b8b8;
  stroke-dasharray: 1 2;
}

.frame {
  fill: none;
  stroke: #000;
}

.legend-box {
  fill: #fffdf0;
  stroke: #000;
}

.chart polyline {
  fill: none;
}

.s1 { stroke: #0000b0; marker: url(#m1); }
.s2 { stroke: #d01818; stroke-dasharray: 3 2; marker: url(#m2); }
.s3 { stroke: #1c7a28; stroke-dasharray: 14 3; marker: url(#m3); }
.s4 { stroke: #c818c8; stroke-dasharray: 8 2; marker: url(#m4); }
.s5 { stroke: #000; stroke-dasharray: 4 2; marker: url(#m5); }
.s6 { stroke: #808080; marker: url(#m6); }

/* in the legend only the middle point gets a symbol */
.legend-box ~ polyline {
  marker-start: none;
  marker-end: none;
}

/* status bar */
.statusbar {
  display: flex;
  gap: 4px;
  height: 20px;
  padding: 2px 2px 1px;
  background: #ece9d8;
  border-top: 1px solid #000;
  font-family: "Liberation Sans", sans-serif;
  line-height: 15px;
}

.statusbar span {
  padding-left: 2px;
  border: 1px solid;
  border-color: #000 #fff #fff #000;
  white-space: nowrap;
}

.message { flex: 1; }
.output { width: 114px; }
.sel { width: 43px; }
.weight { width: 106px; }
.empty { width: 38px; }

/* taskbar */
.taskbar {
  display: flex;
  align-items: center;
  height: 30px;
  color: #fff;
  background: linear-gradient(#4a8cf4, #2560e0 15%, #245edb 80%, #1c48b8);
}

.start {
  display: flex;
  align-items: center;
  gap: 5px;
  width: 98px;
  height: 30px;
  padding-left: 11px;
  border-radius: 0 8px 8px 0;
  background: linear-gradient(#6cc06c, #3c9a3c 20%, #389838 75%, #287828);
  box-shadow: inset -3px 0 4px #246c24;
  font-family: "Open Sans", sans-serif;
  font-size: 17px;
  font-weight: bold;
  font-style: italic;
  text-shadow: 1px 1px 1px #1c4c1c;
}

.start svg {
  width: 18px;
  height: 18px;
}

.tasks {
  flex: 1;
  display: flex;
  gap: 2px;
  max-width: 640px;
  margin-left: 10px;
}

.tasks button {
  flex: 1;
  display: flex;
  align-items: center;
  gap: 4px;
  height: 25px;
  padding-left: 9px;
  border-radius: 3px;
  background: linear-gradient(#5c9cf8, #3c80f0 20%, #3c80f4 85%, #2c6ce0);
  white-space: nowrap;
}

.tasks .pressed {
  background: #1c4cb4;
  box-shadow: inset 1px 1px 2px #10307c;
}

.tasks svg {
  width: 16px;
  height: 16px;
}

.lang {
  display: flex;
  align-items: center;
  gap: 12px;
  margin-left: auto;
}

.lang svg {
  width: 16px;
  height: 14px;
}

.battery {
  width: 56px;
  height: 23px;
  margin-left: 15px;
  background: #7cf04c;
  border: 1px solid #b4f898;
  color: #084010;
  font-size: 12px;
  line-height: 21px;
  text-align: center;
}

.plug {
  width: 16px;
  height: 14px;
  margin: 0 10px 0 11px;
}

.tray {
  display: flex;
  align-items: center;
  gap: 6px;
  width: 65px;
  height: 30px;
  background: linear-gradient(90deg, transparent 9px, #1490ea 9px);
}

.tray button {
  width: 17px;
  height: 17px;
  border-radius: 50%;
  background: radial-gradient(#6cb4f8, #1860c8);
}

.tray svg {
  display: block;
  width: 16px;
  height: 16px;
}
```
